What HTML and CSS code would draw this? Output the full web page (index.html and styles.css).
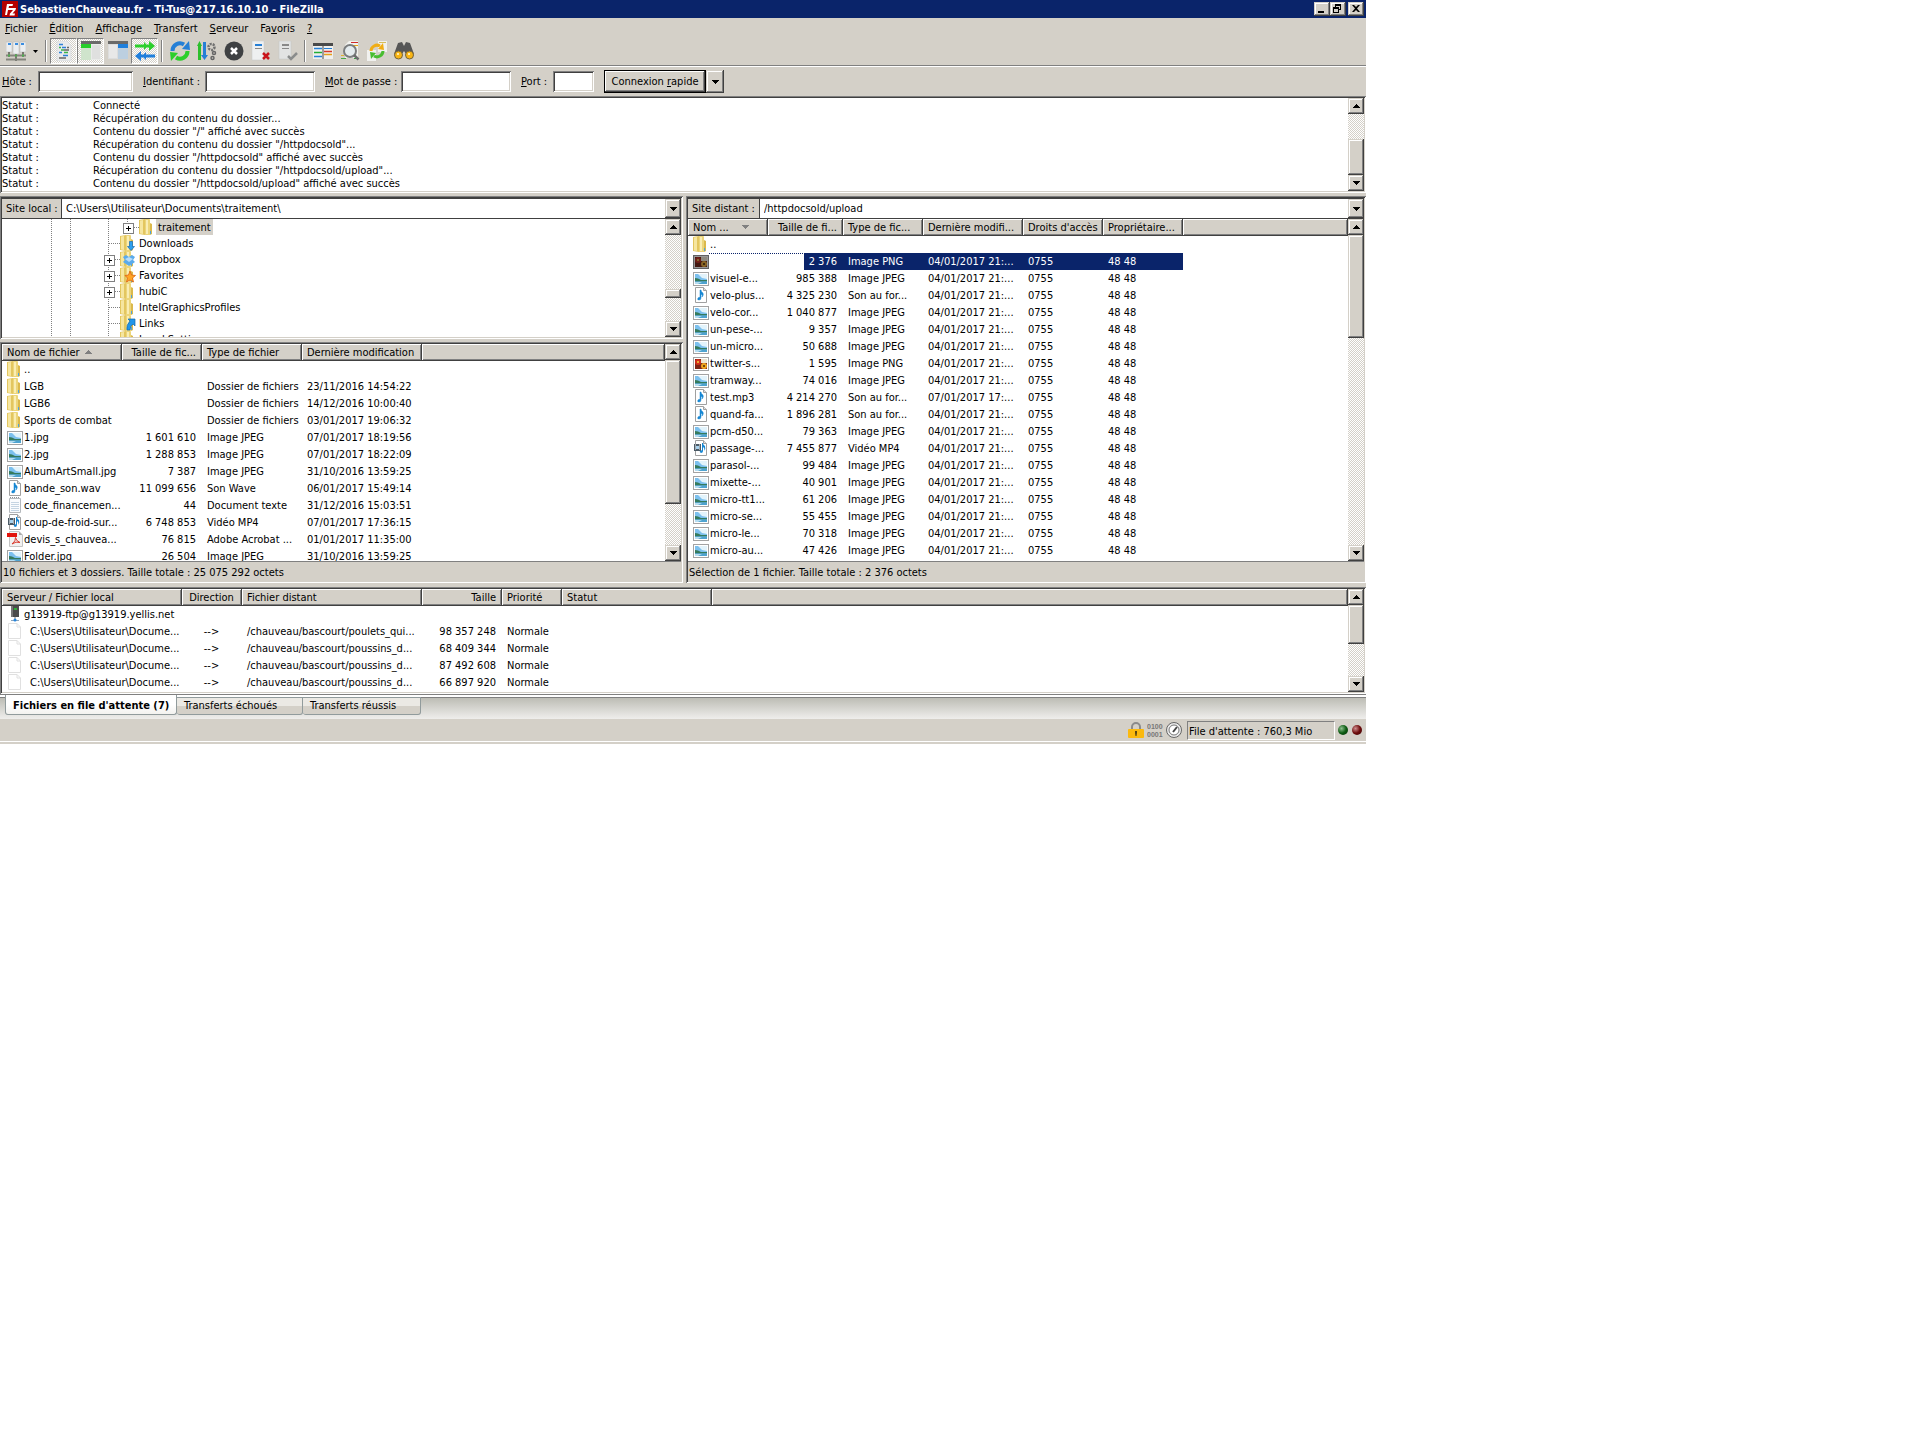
FILE: index.html
```html
<!DOCTYPE html>
<html lang="fr">
<head>
    <meta charset="UTF-8">
    <meta name="viewport" content="width=device-width, initial-scale=1.0">
    <title>SebastienChauveau.fr - FileZilla</title>
    <link rel="stylesheet" href="styles.css">
</head>
<body>

    <!-- Icon sprite -->
    <svg class="sprite" xmlns="http://www.w3.org/2000/svg">
        <symbol id="i-folder" viewBox="0 0 16 16">
            <path d="M0 1L6 0V16L0 15Z" fill="#e3c65f"/>
            <path d="M1 1.500L4 1V15L1 14.500Z" fill="#f6e6a0"/>
            <path d="M6 0H10.500L11 1V16H6Z" fill="#ecd57a"/>
            <path d="M7 1H9V15H7Z" fill="#f9edb4"/>
            <path d="M11 4L13 5V15L11 16Z" fill="#dbb94c"/>
            <rect x="11" y="12" width="1" height="3" fill="#4fa3e0"/>
        </symbol>
        <symbol id="i-jpg" viewBox="0 -1 16 16">
            <rect x="0.500" y="1.500" width="15" height="13" fill="#fff" stroke="#a3a3a3"/>
            <rect x="2" y="3" width="12" height="10" fill="#7cc0ee"/>
            <path d="M5 3H14V8L9 7Z" fill="#e2f3fb"/>
            <path d="M2 7L5 7.500L8 9L14 9V10.500H2Z" fill="#357a5c"/>
            <path d="M2 10.500H14V13H2Z" fill="#4ea3d0"/>
            <path d="M2 11L9 11L5 13H2Z" fill="#b5dcf0"/>
        </symbol>
        <symbol id="i-png" viewBox="0 -1 16 16">
            <rect x="0.500" y="1.500" width="15" height="13" fill="#fff" stroke="#a3a3a3"/>
            <rect x="2" y="3" width="12" height="10" fill="#7d2415"/>
            <rect x="8" y="3" width="6" height="4" fill="#ece4cf"/>
            <circle cx="5" cy="6" r="3" fill="#d3301d"/>
            <circle cx="5" cy="6" r="1" fill="#f2d43c"/>
            <circle cx="11" cy="10" r="3" fill="#f0a51e"/>
            <circle cx="11" cy="10" r="1" fill="#4a2708"/>
        </symbol>
        <symbol id="i-audio" viewBox="0 0 16 16">
            <path d="M2.500 0.500H10.500L13.500 3.500V15.500H2.500Z" fill="#fff" stroke="#a0a0a0"/>
            <path d="M10.500 0.500V3.500H13.500" fill="#ddd" stroke="#a0a0a0"/>
            <path d="M7 3H8Q8 5 10 6Q11 8 9 10Q10 8 8 7V11Q8 13 6 13Q4 13 5 11Q6 10 7 10.500Z" fill="#1787d3" stroke="#1787d3" stroke-width="0.500"/>
        </symbol>
        <symbol id="i-video" viewBox="0 0 16 16">
            <path d="M2.500 0.500H10.500L13.500 3.500V15.500H2.500Z" fill="#fff" stroke="#a0a0a0"/>
            <path d="M10.500 0.500V3.500H13.500" fill="#ddd" stroke="#a0a0a0"/>
            <rect x="1" y="4" width="7" height="7" fill="#4b5a66"/>
            <path d="M2 5H3M2 7H3M2 9H3M6 5H7M6 7H7M6 9H7" stroke="#fff"/>
            <rect x="3" y="6" width="3" height="3" fill="#a8d2ee"/>
            <path d="M9 3H10Q10 5 12 6Q13 9 11 11Q12 8 10 7V11Q10 13 8 13Q6 12 7 11Q8 10 9 10.500Z" fill="#1787d3"/>
        </symbol>
        <symbol id="i-text" viewBox="0 0 16 16">
            <path d="M2.500 1.500H13.500V15.500H2.500Z" fill="#fafcfe" stroke="#b5b9bd"/>
            <path d="M3 0.500H13" stroke="#8c9196" stroke-dasharray="1 1"/>
            <path d="M4 5.500H12M4 7.500H12M4 9.500H12M4 11.500H12M4 13.500H12" stroke="#c5d5e3"/>
        </symbol>
        <symbol id="i-pdf" viewBox="0 0 16 16">
            <path d="M2.500 0.500H12L15.500 4V15.500H2.500Z" fill="#f1f1f1" stroke="#c4c4c4"/>
            <path d="M12 0.500V4H15.500Z" fill="#aaa"/>
            <rect x="0" y="2" width="10" height="4" fill="#e2130b"/>
            <path d="M5 13Q9 10 8.500 6.500Q9 10 13 11.500Q9 10 5 13" fill="none" stroke="#d93a2e"/>
        </symbol>
        <symbol id="i-page" viewBox="0 0 16 16">
            <path d="M1.500 0.500H10L13.500 4V15.500H1.500Z" fill="#fff" stroke="#e0e0e0"/>
            <path d="M10 0.500V4H13.500" fill="none" stroke="#e0e0e0"/>
        </symbol>
        <symbol id="i-server" viewBox="0 0 16 16">
            <rect x="4" y="0" width="8" height="11" fill="#4c4c4c"/>
            <rect x="4" y="0" width="2" height="11" fill="#777"/>
            <rect x="7" y="2" width="3" height="2" fill="#2fae3a"/>
            <path d="M8 11V14" stroke="#777"/>
            <path d="M4 14.500H12" stroke="#8aa5bd"/>
            <circle cx="8" cy="14" r="1.500" fill="#2384dd"/>
        </symbol>
        <symbol id="i-down" viewBox="0 0 16 16">
            <use href="#i-folder"/>
            <path d="M9.500 6.500H12.500V11.500H14.500L11 15.500L7.500 11.500H9.500Z" fill="#2c9ff0" stroke="#176cb4" stroke-width="0.700"/>
        </symbol>
        <symbol id="i-dropbox" viewBox="0 0 16 16">
            <use href="#i-folder"/>
            <path d="M3 6L6 4L9 6L12 4L15 6L13 9L15 11L12 13L9 15L6 13L3 11L5 9Z" fill="#5aabec"/>
            <path d="M5 8L9 6L13 8L9 11Z" fill="#b8dcf8"/>
        </symbol>
        <symbol id="i-fav" viewBox="0 0 16 16">
            <use href="#i-folder"/>
            <path d="M10 4L11.500 8L15.500 8.500L12.500 11L13.500 15L10 13L6.500 15L7.500 11L5 8.500L8.500 8Z" fill="#ffa526" stroke="#dc5f10" stroke-width="0.800"/>
        </symbol>
        <symbol id="i-link" viewBox="0 0 16 16">
            <use href="#i-folder"/>
            <path d="M8 4H15V11L13 9Q10 11 10 15H7Q6 10 10 6Z" fill="#2196ea" stroke="#1467ab" stroke-width="0.700"/>
        </symbol>
        <symbol id="up" viewBox="0 0 7 4"><path d="M3 0H4V1H5V2H6V3H7V4H0V3H1V2H2V1H3Z"/></symbol>
        <symbol id="dn" viewBox="0 0 7 4"><path d="M0 0H7V1H6V2H5V3H4V4H3V3H2V2H1V1H0Z"/></symbol>
    </svg>

    <div class="window">
        <header class="titlebar">
            <svg class="icon" viewBox="0 0 16 16"><rect width="16" height="16" fill="#b40000"/><path d="M3 14L5 3H11L10.500 5H7L6.600 7H9.500L9 9H6L5 14ZM9 7H14L13.500 9L10.500 12.500H13L12.500 14.500H7.500L8 12.500L11 9H8.800Z" fill="#fff"/></svg>
            <h1>SebastienChauveau.fr - Ti-Tus@217.16.10.10 - FileZilla</h1>
            <button class="sysbtn" aria-label="Réduire"><svg viewBox="0 0 16 14"><path d="M4 9H10V11H4Z"/></svg></button>
            <button class="sysbtn" aria-label="Restaurer"><svg viewBox="0 0 16 14"><path d="M5 2H11V8H9V7H10V4H6V5H5ZM3 5H9V11H3ZM4 7V10H8V7Z" fill-rule="evenodd"/></svg></button>
            <button class="sysbtn close" aria-label="Fermer"><svg viewBox="0 0 16 14"><path d="M4 3H6L8 5L10 3H12L9 6.500L12 10H10L8 8L6 10H4L7 6.500Z"/></svg></button>
        </header>

        <nav class="menubar">
            <button><u>F</u>ichier</button>
            <button><u>É</u>dition</button>
            <button><u>A</u>ffichage</button>
            <button><u>T</u>ransfert</button>
            <button><u>S</u>erveur</button>
            <button>Fa<u>v</u>oris</button>
            <button><u>?</u></button>
        </nav>

        <div class="toolbar">
            <button aria-label="Gestionnaire de sites"><svg viewBox="0 0 20 20"><path d="M0 1H6V11H0ZM7 1H13V13H7ZM14 1H20V11H14Z" fill="#eceef0" stroke="#b4b4b4" stroke-width="0.500"/><path d="M2 3H5M9 3H12M15 3H18" stroke="#3a8de0" stroke-width="2"/><path d="M3 11V16M10 13V20M17 11V16" stroke="#77776f" stroke-width="2"/><path d="M0 14.500H20M0 18.500H20" stroke="#85857e" stroke-width="2"/><path d="M2 14.500H4M9 14.500H11M16 14.500H18" stroke="#4fae4f" stroke-width="2"/></svg></button>
            <button class="more" aria-label="Liste des sites"><svg viewBox="0 0 20 20"><path d="M8 9H13L10.500 12Z"/></svg></button>
            <span class="sep"></span>
            <button class="on" aria-label="Journal"><svg viewBox="0 0 20 20"><path d="M3 0H13L17 4V20H3Z" fill="#e9eaeb" stroke="#ccd0d4" stroke-width="0.500"/><path d="M5 3.500H9M8 6.500H12M5 11.500H8M9 14.500H14" stroke="#2d7fd6" stroke-width="1.500"/><path d="M5 6.500H7M7 9H10M10 11.500H14" stroke="#3bb54a" stroke-width="1.500"/><path d="M10 9H15M13 6.500H15M5 17H12" stroke="#666" stroke-width="1.500"/></svg></button>
            <button class="on" aria-label="Arborescence locale"><svg viewBox="0 0 20 20"><rect x="0" y="1" width="20" height="18" fill="#e9ebe9"/><rect y="0" width="20" height="3" fill="#6a6a6a"/><rect y="3" width="10" height="4" fill="#27cf2b"/><rect x="0" y="7" width="10" height="12" fill="#cfe4cc"/><rect x="11" y="4" width="8" height="14" fill="#dfe0df"/></svg></button>
            <button aria-label="Arborescence distante"><svg viewBox="0 0 20 20"><rect x="0" y="1" width="20" height="17" fill="#dcdddd"/><rect y="0" width="20" height="3" fill="#6a6a6a"/><rect x="10" y="3" width="10" height="4" fill="#1f7fdc"/><rect x="10" y="7" width="10" height="11" fill="#bccfe0"/><rect x="1" y="4" width="8" height="13" fill="#e8e8e8"/></svg></button>
            <button class="on" aria-label="File d'attente"><svg viewBox="0 0 20 20"><path d="M0 3.500H7V6.500H0ZM7 3.500H9V1L13 5L9 9V6.500H7ZM13 3.500H14V0L20 5L14 10V6.500H12V3.500Z" fill="#2ccf2c"/><path d="M20 13.500H13V16.500H20ZM13 13.500H11V11L7 15L11 19V16.500H13ZM8 13.500H6V10L0 15L6 20V16.500H8Z" fill="#1f7fdc"/></svg></button>
            <span class="sep"></span>
            <button aria-label="Actualiser"><svg viewBox="0 0 20 20"><path d="M2.500 10A7.500 7.500 0 0 1 14 3.500" fill="none" stroke="#257fd6" stroke-width="4"/><path d="M12 8L20 9L19 0Z" fill="#257fd6"/><path d="M17.500 10A7.500 7.500 0 0 1 6 16.500" fill="none" stroke="#2ccf2c" stroke-width="4"/><path d="M8 12L0 11L1 20Z" fill="#2ccf2c"/></svg></button>
            <button aria-label="Traiter la file"><svg viewBox="0 0 20 20"><path d="M0 5L2.500 0L5 5H4V19H1V5Z" fill="#2cbf2c"/><path d="M6 1H9V14H11L7.500 19L4 14H6Z" fill="#257fd6"/><circle cx="14.500" cy="6" r="3" fill="none" stroke="#707070" stroke-width="2.500" stroke-dasharray="2 1"/><circle cx="17" cy="12" r="1.500" fill="none" stroke="#666" stroke-width="1.500"/><circle cx="15.500" cy="17" r="1.500" fill="none" stroke="#666" stroke-width="1.500"/></svg></button>
            <button aria-label="Annuler"><svg viewBox="0 0 20 20"><circle cx="10" cy="10" r="9.500" fill="#3f4143"/><path d="M7 7L13 13M13 7L7 13" stroke="#fff" stroke-width="2.500"/></svg></button>
            <button aria-label="Déconnexion"><svg viewBox="0 0 20 20"><path d="M1 0H13V19H1Z" fill="#eef0f1" stroke="#c6c9cb" stroke-width="0.500"/><path d="M4 4H11" stroke="#257fd6" stroke-width="2"/><path d="M4 7.500H11" stroke="#888"/><path d="M12 12L18 18M18 12L12 18" stroke="#c9141b" stroke-width="2.500"/></svg></button>
            <button aria-label="Reconnexion"><svg viewBox="0 0 20 20"><path d="M1 0H13V18H1Z" fill="#e2e3e3" stroke="#c2c4c4" stroke-width="0.500"/><path d="M4 4H11" stroke="#888" stroke-width="2"/><path d="M4 7.500H11" stroke="#888"/><path d="M10 15L13 18L19 12" fill="none" stroke="#8a8c8c" stroke-width="2.500"/></svg></button>
            <span class="sep"></span>
            <button aria-label="Filtres"><svg viewBox="0 0 20 20"><rect y="2" width="20" height="16" fill="#f0f0ee"/><rect y="2" width="20" height="3" fill="#4a4a4a"/><path d="M1 7.500H9M1 15.500H9" stroke="#257fd6" stroke-width="1.500"/><path d="M1 11.500H9" stroke="#22ad35" stroke-width="1.500"/><path d="M11 7.500H19" stroke="#257fd6"/><path d="M11 13.500H19" stroke="#e7a11a" stroke-width="1.500"/><path d="M11 10.500H19" stroke="#d83a2a" stroke-width="1.500"/><path d="M10 2V18" stroke="#4a4a4a"/></svg></button>
            <button aria-label="Comparer"><svg viewBox="0 0 20 20"><path d="M9 0H18V17H5V4Z" fill="#f2f2ee"/><path d="M11 1.500H18" stroke="#cf2b2b"/><path d="M13 4.500H18" stroke="#e8a614"/><path d="M14 17.500H18" stroke="#35a443"/><circle cx="10" cy="10" r="6" fill="#e4ebee" stroke="#7b7d7e" stroke-width="2"/><path d="M14 14L18.500 18.500" stroke="#6b6d6e" stroke-width="2.500"/><path d="M1 14.500H4" stroke="#e0b030"/><path d="M1 17.500H6" stroke="#48a848"/></svg></button>
            <button aria-label="Navigation synchronisée"><svg viewBox="0 0 20 20"><path d="M11 0H20V11H11ZM0 9H9V20H0Z" fill="#f1f1ef"/><path d="M12 1.500H19" stroke="#d6be5c"/><path d="M4 10A6 6 0 0 1 13 5" fill="none" stroke="#f0ad15" stroke-width="3"/><path d="M11 8L17 9L16 2Z" fill="#f0ad15"/><path d="M16 10A6 6 0 0 1 7 15" fill="none" stroke="#48bd30" stroke-width="3"/><path d="M9 12L3 11L4 18Z" fill="#48bd30"/></svg></button>
            <button aria-label="Rechercher"><svg viewBox="0 0 20 20"><path d="M4 2L8 1L10 5L12 1L16 2L20 13H12L10 10L8 13H0Z" fill="#565656"/><circle cx="4.500" cy="14" r="4" fill="#f9b514" stroke="#74633c"/><circle cx="15.500" cy="14" r="4" fill="#f9b514" stroke="#74633c"/><path d="M3 13H5M14 13H16" stroke="#ffe9a5" stroke-width="2"/></svg></button>
        </div>

        <form class="quickconnect">
            <label for="host" class="w-host"><u>H</u>ôte :</label>
            <input type="text" id="host" class="in-host">
            <label for="user" class="w-user"><u>I</u>dentifiant :</label>
            <input type="text" id="user">
            <label for="pass" class="w-pass"><u>M</u>ot de passe :</label>
            <input type="password" id="pass">
            <label for="port" class="w-port"><u>P</u>ort :</label>
            <input type="text" id="port" class="in-port">
            <button type="button" class="connect"><span>Connexion <u>r</u>apide</span></button>
            <button type="button" class="drop" aria-label="Historique"><svg class="arrow"><use href="#dn"/></svg></button>
        </form>

        <section class="sunken pane log">
            <dl>
                <dt>Statut :</dt><dd>Connecté</dd>
                <dt>Statut :</dt><dd>Récupération du contenu du dossier...</dd>
                <dt>Statut :</dt><dd>Contenu du dossier "/" affiché avec succès</dd>
                <dt>Statut :</dt><dd>Récupération du contenu du dossier "/httpdocsold"...</dd>
                <dt>Statut :</dt><dd>Contenu du dossier "/httpdocsold" affiché avec succès</dd>
                <dt>Statut :</dt><dd>Récupération du contenu du dossier "/httpdocsold/upload"...</dd>
                <dt>Statut :</dt><dd>Contenu du dossier "/httpdocsold/upload" affiché avec succès</dd>
            </dl>
            <div class="scrollbar">
                <button aria-label="Haut"><svg class="arrow"><use href="#up"/></svg></button>
                <div class="track"><div class="thumb"></div></div>
                <button aria-label="Bas"><svg class="arrow"><use href="#dn"/></svg></button>
            </div>
        </section>

        <main class="sites">
            <div class="local">
                <section class="sunken">
                    <div class="path">
                        <label for="local-path" class="w-local">Site local :</label>
                        <select id="local-path"><option>C:\Users\Utilisateur\Documents\traitement\</option></select>
                        <span class="drop"><svg class="arrow"><use href="#dn"/></svg></span>
                    </div>
                    <div class="pane tree">
                        <ul>
                            <li><i class="v"></i><i class="v"></i><i></i><i class="v"></i><i class="last plus"></i><svg class="icon"><use href="#i-folder"/></svg><span class="current">traitement</span></li>
                            <li><i class="v"></i><i class="v"></i><i></i><i class="v h"></i><svg class="icon"><use href="#i-down"/></svg><span>Downloads</span></li>
                            <li><i class="v"></i><i class="v"></i><i></i><i class="v plus"></i><svg class="icon"><use href="#i-dropbox"/></svg><span>Dropbox</span></li>
                            <li><i class="v"></i><i class="v"></i><i></i><i class="v plus"></i><svg class="icon"><use href="#i-fav"/></svg><span>Favorites</span></li>
                            <li><i class="v"></i><i class="v"></i><i></i><i class="v plus"></i><svg class="icon"><use href="#i-folder"/></svg><span>hubiC</span></li>
                            <li><i class="v"></i><i class="v"></i><i></i><i class="v h"></i><svg class="icon"><use href="#i-folder"/></svg><span>IntelGraphicsProfiles</span></li>
                            <li><i class="v"></i><i class="v"></i><i></i><i class="v h"></i><svg class="icon"><use href="#i-link"/></svg><span>Links</span></li>
                            <li><i class="v"></i><i class="v"></i><i></i><i class="v h"></i><svg class="icon"><use href="#i-folder"/></svg><span>Local Settings</span></li>
                        </ul>
                        <div class="scrollbar">
                            <button aria-label="Haut"><svg class="arrow"><use href="#up"/></svg></button>
                            <div class="track"><div class="thumb"></div></div>
                            <button aria-label="Bas"><svg class="arrow"><use href="#dn"/></svg></button>
                        </div>
                    </div>
                </section>

                <section class="sunken">
                    <div class="pane files">
                        <div class="view">
                            <table>
                                <colgroup><col class="c120"><col class="c80"><col class="c100"><col class="c120"><col></colgroup>
                                <thead><tr><th>Nom de fichier <svg class="sort"><use href="#up"/></svg></th><th class="num">Taille de fic...</th><th>Type de fichier</th><th>Dernière modification</th><th></th></tr></thead>
                                <tbody>
                                    <tr><td><svg class="icon"><use href="#i-folder"/></svg>..</td><td></td><td></td><td></td></tr>
                                    <tr><td><svg class="icon"><use href="#i-folder"/></svg>LGB</td><td></td><td>Dossier de fichiers</td><td>23/11/2016 14:54:22</td></tr>
                                    <tr><td><svg class="icon"><use href="#i-folder"/></svg>LGB6</td><td></td><td>Dossier de fichiers</td><td>14/12/2016 10:00:40</td></tr>
                                    <tr><td><svg class="icon"><use href="#i-folder"/></svg>Sports de combat</td><td></td><td>Dossier de fichiers</td><td>03/01/2017 19:06:32</td></tr>
                                    <tr><td><svg class="icon"><use href="#i-jpg"/></svg>1.jpg</td><td class="num">1 601 610</td><td>Image JPEG</td><td>07/01/2017 18:19:56</td></tr>
                                    <tr><td><svg class="icon"><use href="#i-jpg"/></svg>2.jpg</td><td class="num">1 288 853</td><td>Image JPEG</td><td>07/01/2017 18:22:09</td></tr>
                                    <tr><td><svg class="icon"><use href="#i-jpg"/></svg>AlbumArtSmall.jpg</td><td class="num">7 387</td><td>Image JPEG</td><td>31/10/2016 13:59:25</td></tr>
                                    <tr><td><svg class="icon"><use href="#i-audio"/></svg>bande_son.wav</td><td class="num">11 099 656</td><td>Son Wave</td><td>06/01/2017 15:49:14</td></tr>
                                    <tr><td><svg class="icon"><use href="#i-text"/></svg>code_financemen...</td><td class="num">44</td><td>Document texte</td><td>31/12/2016 15:03:51</td></tr>
                                    <tr><td><svg class="icon"><use href="#i-video"/></svg>coup-de-froid-sur...</td><td class="num">6 748 853</td><td>Vidéo MP4</td><td>07/01/2017 17:36:15</td></tr>
                                    <tr><td><svg class="icon"><use href="#i-pdf"/></svg>devis_s_chauvea...</td><td class="num">76 815</td><td>Adobe Acrobat ...</td><td>01/01/2017 11:35:00</td></tr>
                                    <tr><td><svg class="icon"><use href="#i-jpg"/></svg>Folder.jpg</td><td class="num">26 504</td><td>Image JPEG</td><td>31/10/2016 13:59:25</td></tr>
                                </tbody>
                            </table>
                        </div>
                        <div class="scrollbar">
                            <button aria-label="Haut"><svg class="arrow"><use href="#up"/></svg></button>
                            <div class="track"><div class="thumb"></div></div>
                            <button aria-label="Bas"><svg class="arrow"><use href="#dn"/></svg></button>
                        </div>
                    </div>
                    <p class="summary">10 fichiers et 3 dossiers. Taille totale : 25 075 292 octets</p>
                </section>
            </div>

            <section class="sunken remote">
                <div class="path">
                    <label for="remote-path" class="w-remote">Site distant :</label>
                    <select id="remote-path"><option>/httpdocsold/upload</option></select>
                    <span class="drop"><svg class="arrow"><use href="#dn"/></svg></span>
                </div>
                <div class="pane files">
                    <div class="view">
                        <table>
                            <colgroup><col class="c80"><col class="c75"><col class="c80"><col class="c100"><col class="c80"><col class="c80"><col></colgroup>
                            <thead><tr><th>Nom ... <svg class="sort"><use href="#dn"/></svg></th><th class="num">Taille de fi...</th><th>Type de fic...</th><th>Dernière modifi...</th><th>Droits d'accès</th><th>Propriétaire...</th><th></th></tr></thead>
                            <tbody>
                                <tr><td><svg class="icon"><use href="#i-folder"/></svg>..</td><td></td><td></td><td></td><td></td><td></td></tr>
                                <tr class="selected"><td><svg class="icon"><use href="#i-png"/></svg></td><td class="num">2 376</td><td>Image PNG</td><td>04/01/2017 21:...</td><td>0755</td><td>48 48</td></tr>
                                <tr><td><svg class="icon"><use href="#i-jpg"/></svg>visuel-e...</td><td class="num">985 388</td><td>Image JPEG</td><td>04/01/2017 21:...</td><td>0755</td><td>48 48</td></tr>
                                <tr><td><svg class="icon"><use href="#i-audio"/></svg>velo-plus...</td><td class="num">4 325 230</td><td>Son au for...</td><td>04/01/2017 21:...</td><td>0755</td><td>48 48</td></tr>
                                <tr><td><svg class="icon"><use href="#i-jpg"/></svg>velo-cor...</td><td class="num">1 040 877</td><td>Image JPEG</td><td>04/01/2017 21:...</td><td>0755</td><td>48 48</td></tr>
                                <tr><td><svg class="icon"><use href="#i-jpg"/></svg>un-pese-...</td><td class="num">9 357</td><td>Image JPEG</td><td>04/01/2017 21:...</td><td>0755</td><td>48 48</td></tr>
                                <tr><td><svg class="icon"><use href="#i-jpg"/></svg>un-micro...</td><td class="num">50 688</td><td>Image JPEG</td><td>04/01/2017 21:...</td><td>0755</td><td>48 48</td></tr>
                                <tr><td><svg class="icon"><use href="#i-png"/></svg>twitter-s...</td><td class="num">1 595</td><td>Image PNG</td><td>04/01/2017 21:...</td><td>0755</td><td>48 48</td></tr>
                                <tr><td><svg class="icon"><use href="#i-jpg"/></svg>tramway...</td><td class="num">74 016</td><td>Image JPEG</td><td>04/01/2017 21:...</td><td>0755</td><td>48 48</td></tr>
                                <tr><td><svg class="icon"><use href="#i-audio"/></svg>test.mp3</td><td class="num">4 214 270</td><td>Son au for...</td><td>07/01/2017 17:...</td><td>0755</td><td>48 48</td></tr>
                                <tr><td><svg class="icon"><use href="#i-audio"/></svg>quand-fa...</td><td class="num">1 896 281</td><td>Son au for...</td><td>04/01/2017 21:...</td><td>0755</td><td>48 48</td></tr>
                                <tr><td><svg class="icon"><use href="#i-jpg"/></svg>pcm-d50...</td><td class="num">79 363</td><td>Image JPEG</td><td>04/01/2017 21:...</td><td>0755</td><td>48 48</td></tr>
                                <tr><td><svg class="icon"><use href="#i-video"/></svg>passage-...</td><td class="num">7 455 877</td><td>Vidéo MP4</td><td>04/01/2017 21:...</td><td>0755</td><td>48 48</td></tr>
                                <tr><td><svg class="icon"><use href="#i-jpg"/></svg>parasol-...</td><td class="num">99 484</td><td>Image JPEG</td><td>04/01/2017 21:...</td><td>0755</td><td>48 48</td></tr>
                                <tr><td><svg class="icon"><use href="#i-jpg"/></svg>mixette-...</td><td class="num">40 901</td><td>Image JPEG</td><td>04/01/2017 21:...</td><td>0755</td><td>48 48</td></tr>
                                <tr><td><svg class="icon"><use href="#i-jpg"/></svg>micro-tt1...</td><td class="num">61 206</td><td>Image JPEG</td><td>04/01/2017 21:...</td><td>0755</td><td>48 48</td></tr>
                                <tr><td><svg class="icon"><use href="#i-jpg"/></svg>micro-se...</td><td class="num">55 455</td><td>Image JPEG</td><td>04/01/2017 21:...</td><td>0755</td><td>48 48</td></tr>
                                <tr><td><svg class="icon"><use href="#i-jpg"/></svg>micro-le...</td><td class="num">70 318</td><td>Image JPEG</td><td>04/01/2017 21:...</td><td>0755</td><td>48 48</td></tr>
                                <tr><td><svg class="icon"><use href="#i-jpg"/></svg>micro-au...</td><td class="num">47 426</td><td>Image JPEG</td><td>04/01/2017 21:...</td><td>0755</td><td>48 48</td></tr>
                            </tbody>
                        </table>
                    </div>
                    <div class="scrollbar">
                        <button aria-label="Haut"><svg class="arrow"><use href="#up"/></svg></button>
                        <div class="track"><div class="thumb"></div></div>
                        <button aria-label="Bas"><svg class="arrow"><use href="#dn"/></svg></button>
                    </div>
                </div>
                <p class="summary">Sélection de 1 fichier. Taille totale : 2 376 octets</p>
            </section>
        </main>

        <section class="sunken pane queue">
            <div class="view">
                <table>
                    <colgroup><col class="c180"><col class="c60"><col class="c180"><col class="c80"><col class="c60"><col class="c150"><col></colgroup>
                    <thead><tr><th>Serveur / Fichier local</th><th class="mid">Direction</th><th>Fichier distant</th><th class="num">Taille</th><th>Priorité</th><th>Statut</th><th></th></tr></thead>
                    <tbody>
                        <tr><td colspan="3"><svg class="icon"><use href="#i-server"/></svg>g13919-ftp@g13919.yellis.net</td></tr>
                        <tr><td class="sub"><svg class="icon"><use href="#i-page"/></svg>C:\Users\Utilisateur\Docume...</td><td class="mid">--&gt;</td><td>/chauveau/bascourt/poulets_qui...</td><td class="num">98 357 248</td><td>Normale</td></tr>
                        <tr><td class="sub"><svg class="icon"><use href="#i-page"/></svg>C:\Users\Utilisateur\Docume...</td><td class="mid">--&gt;</td><td>/chauveau/bascourt/poussins_d...</td><td class="num">68 409 344</td><td>Normale</td></tr>
                        <tr><td class="sub"><svg class="icon"><use href="#i-page"/></svg>C:\Users\Utilisateur\Docume...</td><td class="mid">--&gt;</td><td>/chauveau/bascourt/poussins_d...</td><td class="num">87 492 608</td><td>Normale</td></tr>
                        <tr><td class="sub"><svg class="icon"><use href="#i-page"/></svg>C:\Users\Utilisateur\Docume...</td><td class="mid">--&gt;</td><td>/chauveau/bascourt/poussins_d...</td><td class="num">66 897 920</td><td>Normale</td></tr>
                    </tbody>
                </table>
            </div>
            <div class="scrollbar">
                <button aria-label="Haut"><svg class="arrow"><use href="#up"/></svg></button>
                <div class="track"><div class="thumb"></div></div>
                <button aria-label="Bas"><svg class="arrow"><use href="#dn"/></svg></button>
            </div>
        </section>

        <div class="tabs">
            <button class="active">Fichiers en file d'attente (7)</button>
            <button class="failed">Transferts échoués</button>
            <button class="done">Transferts réussis</button>
        </div>

        <footer class="statusbar">
            <svg class="icon" viewBox="0 0 16 16"><path d="M4 8V5A4 4 0 0 1 12 5V8" fill="none" stroke="#8b8b8b" stroke-width="2"/><rect y="7" width="16" height="9" rx="1" fill="#fbb90e"/><path d="M7 9H9V11L8.500 14H7.500L7 11Z" fill="#5a4610"/></svg>
            <svg class="icon" viewBox="0 0 16 16"><text x="0" y="7">0100</text><text x="0" y="15">0001</text></svg>
            <svg class="icon" viewBox="0 0 16 16"><circle cx="8" cy="8" r="7.500" fill="#e9e9e9" stroke="#666"/><circle cx="8" cy="8" r="5" fill="#fff" stroke="#777"/><path d="M7 10L11 5" stroke="#444" stroke-width="2"/></svg>
            <p>File d'attente : 760,3 Mio</p>
            <span class="led green"></span>
            <span class="led red"></span>
        </footer>
    </div>

</body>
</html>
```

FILE: styles.css
```css
* {
    box-sizing: border-box;
}

body {
    margin: 0;
    background: #fff;
    color: #000;
    font: 11px/13px "DejaVu Sans Condensed", "DejaVu Sans", sans-serif;
}

button, input, select {
    font: inherit;
    color: inherit;
    margin: 0;
    padding: 0;
    border: 0;
    border-radius: 0;
    background: none;
}

h1, p, ul, dl, dd {
    margin: 0;
    padding: 0;
}

.sprite {
    display: none;
}

.icon {
    width: 16px;
    height: 16px;
    flex: none;
}

.arrow {
    width: 7px;
    height: 4px;
    display: block;
    margin: auto;
}

.window {
    max-width: 1366px;
    background: #d4d0c8;
    white-space: nowrap;
}

/* classic 3D edges */
.sunken {
    padding: 2px;
    box-shadow: inset 1px 1px #808080, inset -1px -1px #fff, inset 2px 2px #404040, inset -2px -2px #d4d0c8;
}

.sysbtn, .scrollbar button, .thumb, .drop {
    background: #d4d0c8;
    box-shadow: inset -1px -1px #404040, inset 1px 1px #d4d0c8, inset -2px -2px #808080, inset 2px 2px #fff;
}

/* title bar */
.titlebar {
    display: flex;
    align-items: center;
    height: 18px;
    padding: 0 2px;
    background: #0a246a;
    color: #fff;
}

.titlebar h1 {
    flex: 1;
    margin-left: 2px;
    font-size: 11px;
    font-weight: bold;
}

.sysbtn {
    width: 16px;
    height: 14px;
}

.sysbtn svg {
    display: block;
}

.close {
    margin-left: 2px;
}

.menubar {
    display: flex;
    gap: 12px;
    height: 20px;
    padding-left: 5px;
}

/* toolbar */
.toolbar {
    display: flex;
    height: 28px;
    padding-left: 2px;
    border-bottom: 1px solid #808080;
}

.toolbar button {
    width: 27px;
    height: 26px;
}

.toolbar svg {
    width: 20px;
    height: 20px;
    display: block;
    margin: auto;
}

.toolbar .more {
    width: 13px;
}

.toolbar .more svg {
    margin-left: -4px;
}

.toolbar .on {
    border: 1px solid;
    border-color: #808080 #fff #fff #808080;
    background: repeating-conic-gradient(#fff 0 25%, #d4d0c8 0 50%) 0 0 / 2px 2px;
}

.sep {
    width: 2px;
    height: 22px;
    margin: 2px 3px 0;
    border-left: 1px solid #808080;
    border-right: 1px solid #fff;
}

/* quick connect */
.quickconnect {
    display: flex;
    align-items: center;
    height: 30px;
    padding-left: 2px;
    border-top: 1px solid #fff;
}

.quickconnect input {
    width: 110px;
    height: 21px;
    margin-right: 10px;
    padding: 0 4px;
    background: #fff;
    box-shadow: inset 1px 1px #808080, inset -1px -1px #fff, inset 2px 2px #404040, inset -2px -2px #d4d0c8;
}

.quickconnect .in-host {
    width: 95px;
}

.quickconnect .in-port {
    width: 41px;
}

.w-host {
    width: 36px;
}

.w-user {
    width: 62px;
}

.w-pass {
    width: 76px;
}

.w-port {
    width: 32px;
}

.connect {
    width: 102px;
    height: 23px;
    border: 1px solid #000;
    box-shadow: inset -1px -1px #404040, inset 1px 1px #fff, inset -2px -2px #808080;
}

.quickconnect .drop {
    width: 18px;
    height: 23px;
}

/* panes with a scroll bar */
.pane {
    display: flex;
}

.pane > :first-child {
    flex: 1;
    min-width: 0;
    overflow: hidden;
    background: #fff;
}

.scrollbar {
    display: flex;
    flex-direction: column;
    width: 16px;
    background: repeating-conic-gradient(#fff 0 25%, #d4d0c8 0 50%) 0 0 / 2px 2px;
}

.scrollbar button {
    height: 16px;
}

.track {
    flex: 1;
}

.log .thumb {
    height: 36px;
    margin-top: 25px;
}

.tree .thumb {
    height: 9px;
    margin-top: 54px;
}

.local .files .thumb {
    height: 144px;
}

.remote .thumb {
    height: 103px;
}

.queue .thumb {
    height: 39px;
}

.log {
    height: 97px;
}

.log dl {
    display: grid;
    grid-template-columns: 91px 1fr;
    grid-auto-rows: 13px;
    padding-top: 1px;
}

/* local and remote sites */
.sites {
    display: grid;
    grid-template-columns: 683fr 680fr;
    gap: 3px;
    margin: 3px 0 4px;
}

.local {
    display: flex;
    flex-direction: column;
    gap: 3px;
    min-width: 0;
}

.remote {
    min-width: 0;
}

.path {
    display: flex;
    position: relative;
    height: 21px;
    border: solid #404040;
    border-width: 1px 0;
}

.path label {
    padding: 3px 4px;
    border-right: 1px solid #404040;
}

.w-local {
    width: 60px;
}

.w-remote {
    width: 72px;
}

.path select {
    flex: 1;
    padding-left: 4px;
    background: #fff;
    appearance: none;
}

.path .drop {
    position: absolute;
    top: 0;
    right: 0;
    display: flex;
    width: 16px;
    height: 19px;
    pointer-events: none;
}

/* directory tree */
.tree {
    height: 118px;
}

.tree ul {
    list-style: none;
}

.tree li {
    display: flex;
    height: 16px;
    padding-left: 40px;
}

.tree i {
    position: relative;
    width: 19px;
}

.tree .icon {
    margin: 0 1px 0 2px;
}

.tree li span {
    padding: 2px 2px 1px;
}

.tree .current {
    background: #d4d0c8;
}

.tree .v, .tree .last {
    background: repeating-linear-gradient(#808080 0 1px, transparent 1px 2px) 9px 0 / 1px 100% no-repeat;
}

.tree .last {
    background-size: 1px 8px;
}

/* dotted branch */
.tree .h::before, .tree .plus::before {
    content: "";
    position: absolute;
    left: 10px;
    top: 8px;
    width: 11px;
    height: 1px;
    background: repeating-linear-gradient(to right, #808080 0 1px, transparent 1px 2px);
}

/* expander box */
.tree .plus::after {
    content: "";
    position: absolute;
    left: 5px;
    top: 4px;
    width: 9px;
    height: 9px;
    border: 1px solid #808080;
    background: linear-gradient(#000, #000) center / 5px 1px no-repeat, linear-gradient(#000, #000) center / 1px 5px no-repeat, #fff;
}

/* file lists */
.local .files {
    height: 217px;
}

.remote .files {
    height: 342px;
}

.queue {
    height: 107px;
}

table {
    width: 100%;
    table-layout: fixed;
    border-spacing: 0;
}

.c60 {
    width: 60px;
}

.c75 {
    width: 75px;
}

.c80 {
    width: 80px;
}

.c100 {
    width: 100px;
}

.c120 {
    width: 120px;
}

.c150 {
    width: 150px;
}

.c180 {
    width: 180px;
}

th, td {
    height: 17px;
    padding: 1px 6px 0 5px;
    overflow: hidden;
    text-align: left;
    font-weight: normal;
    line-height: 16px;
}

th {
    background: #d4d0c8;
    box-shadow: inset -1px -1px #404040, inset 1px 1px #fff, inset -2px -2px #808080;
}

td:first-child {
    padding-right: 0;
}

td .icon {
    margin: -1px 1px 0 0;
    vertical-align: top;
}

.sub .icon {
    margin-right: 7px;
}

.num {
    text-align: right;
}

.mid {
    text-align: center;
}

.sort {
    width: 7px;
    height: 4px;
    margin-left: 2px;
    vertical-align: 2px;
    fill: #808080;
}

.remote .sort {
    margin-left: 10px;
}

.selected td {
    background: #0a246a;
    color: #fff;
}

/* name cell being edited, the highlight starts after it */
.selected td:first-child {
    background: repeating-linear-gradient(to right, #0a246a 0 1px, transparent 1px 2px) 21px 0 / 100% 1px no-repeat;
}

.selected td:nth-child(2) {
    background: repeating-linear-gradient(to right, #0a246a 0 1px, transparent 1px 2px) 0 0 / 100% 1px no-repeat, linear-gradient(to right, #fff 36px, #0a246a 36px);
}

.selected .icon {
    filter: brightness(0.6) saturate(0.8);
}

.summary {
    height: 20px;
    padding: 4px 1px 0;
    border-top: 1px solid #808080;
}

/* queue tabs */
.tabs {
    display: flex;
    align-items: flex-start;
    height: 25px;
    padding-left: 5px;
    border-top: 1px solid #808080;
    background: linear-gradient(#fff 2px, #808080 2px 3px, #bdbdb5 3px, #efeeec);
}

.tabs button {
    height: 18px;
    margin-top: 2px;
    padding: 0 7px 2px;
    border: 1px solid #919b9c;
    border-width: 1px 1px 1px 0;
    border-radius: 0 0 3px 3px;
    background: linear-gradient(#ebe9e4 50%, #d4d0c8 50%);
    text-align: left;
}

.tabs .active {
    width: 172px;
    height: 20px;
    margin-top: 0;
    padding-top: 3px;
    border-width: 0 1px 1px;
    background: linear-gradient(#fff 50%, #f3f2ef);
    font-weight: bold;
}

.tabs .failed {
    width: 126px;
}

.tabs .done {
    width: 118px;
}

/* status bar */
.statusbar {
    display: flex;
    align-items: center;
    justify-content: flex-end;
    gap: 3px;
    height: 25px;
    padding: 0 3px 3px 0;
    background: linear-gradient(#fff, #fff) 0 22px / 100% 1px no-repeat;
}

.statusbar p {
    width: 148px;
    height: 19px;
    margin-left: 2px;
    padding: 3px 1px 0;
    border: 1px solid;
    border-color: #808080 #fff #fff #808080;
}

.statusbar text {
    font: bold 7px "Liberation Sans", sans-serif;
    fill: #777;
}

.led {
    width: 10px;
    height: 10px;
    margin-right: 1px;
    border-radius: 50%;
}

.green {
    background: radial-gradient(circle at 35% 35%, #8fc08f, #0d5c12 50%, #063008);
}

.red {
    background: radial-gradient(circle at 35% 35%, #d08f8f, #6e0c0c 50%, #380505);
}
```
